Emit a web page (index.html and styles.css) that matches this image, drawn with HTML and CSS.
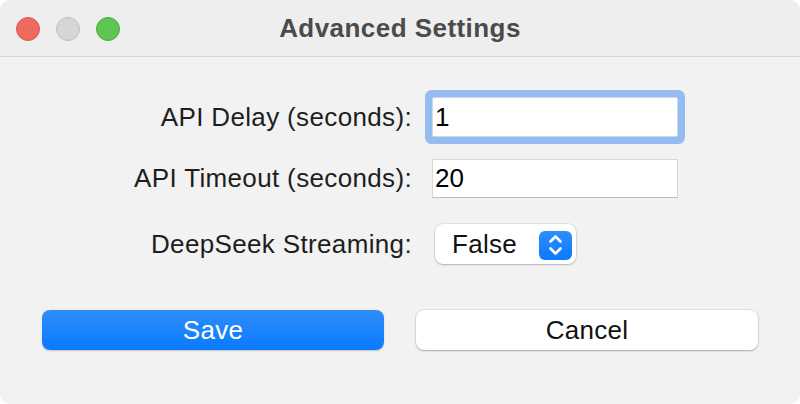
FILE: index.html
```html
<!DOCTYPE html>
<html>
<head>
<meta charset="utf-8">
<link rel="stylesheet" href="styles.css">
</head>
<body>
<div class="window">
  <div class="titlebar">
    <div class="lights">
      <span class="light red"></span>
      <span class="light gray"></span>
      <span class="light green"></span>
    </div>
    <div class="title">Advanced Settings</div>
    <div></div>
  </div>
  <div class="content">
    <div class="row r1">
      <label class="label">API Delay (seconds):</label>
      <div class="field focused">1</div>
    </div>
    <div class="row r2">
      <label class="label">API Timeout (seconds):</label>
      <div class="field">20</div>
    </div>
    <div class="row r3">
      <label class="label">DeepSeek Streaming:</label>
      <div class="popup">
        <span class="popup-text">False</span>
        <span class="stepper">
          <svg width="33" height="29" viewBox="0 0 33 29">
            <path d="M11.5 10.5 L16.5 5.5 L21.5 10.5" fill="none" stroke="#fff" stroke-width="2.6" stroke-linecap="round" stroke-linejoin="round"/>
            <path d="M11.5 17.5 L16.5 22.5 L21.5 17.5" fill="none" stroke="#fff" stroke-width="2.6" stroke-linecap="round" stroke-linejoin="round"/>
          </svg>
        </span>
      </div>
    </div>
    <div class="buttons">
      <button class="btn primary">Save</button>
      <button class="btn">Cancel</button>
    </div>
  </div>
</div>
</body>
</html>
```
FILE: styles.css
```css
* { box-sizing: border-box; }
html, body { margin: 0; padding: 0; background: #ffffff; }
body {
  width: 800px;
  height: 404px;
  font-family: "Liberation Sans", Arial, sans-serif;
}
.window {
  width: 800px;
  height: 404px;
  background: #f2f2f2;
  border-radius: 10px;
  overflow: hidden;
}
.titlebar {
  height: 57px;
  background: #efeeee;
  border-bottom: 1px solid #d6d6d6;
  display: grid;
  grid-template-columns: 1fr auto 1fr;
  align-items: center;
}
.lights {
  display: flex;
  gap: 16px;
  padding-left: 16px;
  padding-top: 1px;
}
.light {
  width: 24px;
  height: 24px;
  border-radius: 50%;
  display: block;
}
.red { background: #ee6a5f; border: 1px solid #d95a4f; }
.gray { background: #d6d6d6; border: 1px solid #bfbfbf; }
.green { background: #5ec453; border: 1px solid #4cab41; }
.title {
  font-weight: bold;
  font-size: 26px;
  color: #4b4b4b;
  letter-spacing: 0.45px;
  padding-top: 1px;
}
.content {
  padding-top: 40px;
}
.row {
  display: flex;
  align-items: center;
  height: 40px;
}
.r2 { margin-top: 22px; height: 39px; }
.r3 { margin-top: 26px; }
.label {
  width: 432px;
  padding-right: 20px;
  text-align: right;
  font-size: 26px;
  letter-spacing: 0.35px;
  color: #1e1e1e;
}
.field {
  width: 246px;
  height: 100%;
  background: #ffffff;
  border: 1px solid #d9d9d9;
  border-bottom-color: #bdbdbd;
  font-size: 26px;
  color: #000;
  padding-left: 2px;
  display: flex;
  align-items: center;
  border-radius: 1px;
}
.field.focused {
  border-color: #c9d9ee;
  border-radius: 2px;
  box-shadow: 0 0 0 7px #94bcf1;
}
.popup {
  margin-left: 3px;
  width: 141px;
  height: 40px;
  background: #ffffff;
  border-radius: 8px;
  box-shadow: 0 0 0 0.5px rgba(0,0,0,0.12), 0 1px 2px rgba(0,0,0,0.22);
  display: flex;
  align-items: center;
  justify-content: space-between;
  padding-left: 17px;
  padding-right: 4px;
}
.popup-text {
  font-size: 26px;
  letter-spacing: 0.3px;
  color: #111;
}
.stepper {
  width: 33px;
  height: 29px;
  border-radius: 6px;
  background: linear-gradient(#2e8dfa, #0a7aff);
  display: block;
  margin-top: 2px;
}
.stepper svg { display: block; }
.buttons {
  display: flex;
  gap: 32px;
  padding: 0 42px;
  margin-top: 46px;
}
.btn {
  flex: 1;
  height: 40px;
  border: none;
  border-radius: 8px;
  background: #ffffff;
  font-family: "Liberation Sans", Arial, sans-serif;
  font-size: 26px;
  letter-spacing: 0.3px;
  color: #111;
  box-shadow: 0 0 0 0.5px rgba(0,0,0,0.12), 0 1px 2px rgba(0,0,0,0.25);
  padding: 0;
}
.btn.primary {
  background: linear-gradient(#2f8dfa, #0a7aff);
  color: #ffffff;
  box-shadow: 0 0.5px 1.5px rgba(0,0,0,0.2);
}
```
